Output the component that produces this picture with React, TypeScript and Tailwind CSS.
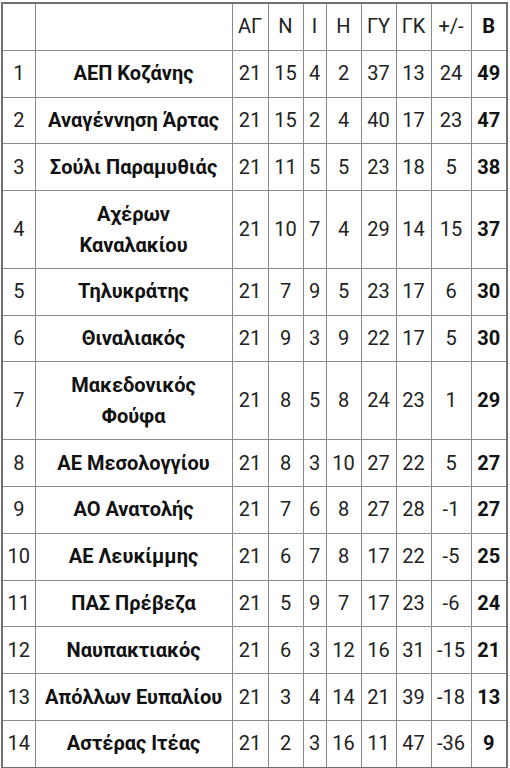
const rows: [number, string[], number[]][] = [
  [1, ["ΑΕΠ Κοζάνης"], [21, 15, 4, 2, 37, 13, 24, 49]],
  [2, ["Αναγέννηση Άρτας"], [21, 15, 2, 4, 40, 17, 23, 47]],
  [3, ["Σούλι Παραμυθιάς"], [21, 11, 5, 5, 23, 18, 5, 38]],
  [4, ["Αχέρων", "Καναλακίου"], [21, 10, 7, 4, 29, 14, 15, 37]],
  [5, ["Τηλυκράτης"], [21, 7, 9, 5, 23, 17, 6, 30]],
  [6, ["Θιναλιακός"], [21, 9, 3, 9, 22, 17, 5, 30]],
  [7, ["Μακεδονικός", "Φούφα"], [21, 8, 5, 8, 24, 23, 1, 29]],
  [8, ["ΑΕ Μεσολογγίου"], [21, 8, 3, 10, 27, 22, 5, 27]],
  [9, ["ΑΟ Ανατολής"], [21, 7, 6, 8, 27, 28, -1, 27]],
  [10, ["ΑΕ Λευκίμμης"], [21, 6, 7, 8, 17, 22, -5, 25]],
  [11, ["ΠΑΣ Πρέβεζα"], [21, 5, 9, 7, 17, 23, -6, 24]],
  [12, ["Ναυπακτιακός"], [21, 6, 3, 12, 16, 31, -15, 21]],
  [13, ["Απόλλων Ευπαλίου"], [21, 3, 4, 14, 21, 39, -18, 13]],
  [14, ["Αστέρας Ιτέας"], [21, 2, 3, 16, 11, 47, -36, 9]],
];

const widths = [33, 197, 36, 35, 23, 35, 35, 35, 40, 36];
const heads = ["ΑΓ", "Ν", "Ι", "Η", "ΓΥ", "ΓΚ", "+/-"];

const cell = "border border-[#8a8a8a] px-0 py-[7.4px] text-center align-middle whitespace-nowrap";

export default function App() {
  return (
    <div className="w-[510px] h-[768px] bg-white pt-[2px] pl-[1px] font-['Roboto',sans-serif] text-[20px] leading-[31px] text-[#222] overflow-hidden">
      <table className="table-fixed border-collapse w-[506px] border-2 border-[#6f6f6f]">
        <colgroup>
          {widths.map((w, i) => (
            <col key={i} style={{ width: w }} />
          ))}
        </colgroup>
        <tbody>
          <tr>
            <td className={cell}></td>
            <td className={cell}></td>
            {heads.map((h) => (
              <td key={h} className={cell}>
                {h}
              </td>
            ))}
            <td className={`${cell} font-bold text-[#111]`}>Β</td>
          </tr>
          {rows.map(([pos, name, nums]) => (
            <tr key={pos}>
              <td className={cell}>{pos}</td>
              <td className={`${cell} font-bold text-[#111]`}>
                {name.map((n, i) => (
                  <div key={i}>{n}</div>
                ))}
              </td>
              {nums.map((n, i) => (
                <td
                  key={i}
                  className={i === 7 ? `${cell} font-bold text-[#111]` : cell}
                >
                  {n}
                </td>
              ))}
            </tr>
          ))}
        </tbody>
      </table>
    </div>
  );
}
